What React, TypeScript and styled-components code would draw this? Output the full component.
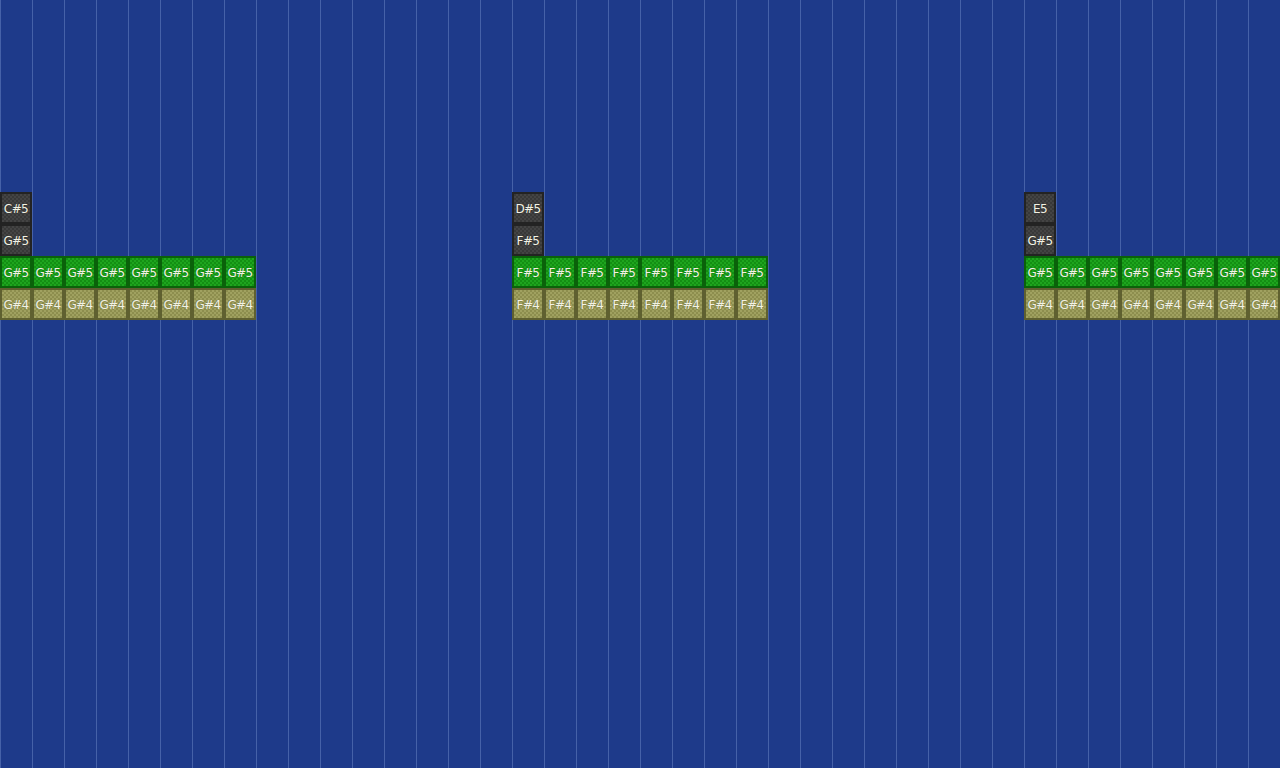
import React from 'react';
import styled, { createGlobalStyle } from 'styled-components';

const CELL = 32;
const COLS = 40;
const ROWS = 24;

const GlobalStyle = createGlobalStyle`
  html, body {
    margin: 0;
    padding: 0;
    background: #1e3a8a;
    overflow: hidden;
  }
`;

const Roll = styled.div`
  display: grid;
  grid-template-columns: repeat(${COLS}, ${CELL}px);
  grid-template-rows: repeat(${ROWS}, ${CELL}px);
  width: ${COLS * CELL}px;
  height: ${ROWS * CELL}px;
  background-color: #1e3a8a;
  background-image: linear-gradient(
    to right,
    rgba(120, 145, 205, 0.45) 0,
    rgba(120, 145, 205, 0.45) 1px,
    transparent 1px
  );
  background-size: ${CELL}px 100%;
`;

type Kind = 'root' | 'upper' | 'lower';

const palette: Record<Kind, { edge: string; a: string; b: string }> = {
  root: { edge: '#232323', a: '#383838', b: '#444444' },
  upper: { edge: '#0a620a', a: '#138f13', b: '#1ea51e' },
  lower: { edge: '#5f6030', a: '#8d8e4e', b: '#a0a160' },
};

const Note = styled.div<{ $kind: Kind; $col: number; $row: number }>`
  grid-column: ${(p) => p.$col + 1};
  grid-row: ${(p) => p.$row + 1};
  box-sizing: border-box;
  border: 2px solid ${(p) => palette[p.$kind].edge};
  background-color: ${(p) => palette[p.$kind].a};
  background-image: conic-gradient(
    ${(p) => palette[p.$kind].b} 0 25%,
    transparent 0 50%,
    ${(p) => palette[p.$kind].b} 0 75%,
    transparent 0
  );
  background-size: 4px 4px;
  display: flex;
  align-items: center;
  justify-content: center;
  font-family: 'DejaVu Sans', 'Liberation Sans', sans-serif;
  font-size: 12px;
  color: #f2f2e4;
  letter-spacing: -0.6px;
  line-height: 1;
  padding-top: 2px;
  text-shadow: 0 0 1px rgba(0, 0, 0, 0.35);
`;

interface Chord {
  col: number;
  stack: string[];
  upper: string;
  lower: string;
}

const chords: Chord[] = [
  { col: 0, stack: ['C#5', 'G#5'], upper: 'G#5', lower: 'G#4' },
  { col: 16, stack: ['D#5', 'F#5'], upper: 'F#5', lower: 'F#4' },
  { col: 32, stack: ['E5', 'G#5'], upper: 'G#5', lower: 'G#4' },
];

const STACK_ROW = 6;
const STEPS = 8;

const App = () => {
  return (
    <>
      <GlobalStyle />
      <Roll>
        {chords.map((chord) => (
          <React.Fragment key={chord.col}>
            {chord.stack.map((name, i) => (
              <Note
                key={`s${i}`}
                $kind="root"
                $col={chord.col}
                $row={STACK_ROW + i}
              >
                {name}
              </Note>
            ))}
            {Array.from({ length: STEPS }).map((_, i) => (
              <Note
                key={`u${i}`}
                $kind="upper"
                $col={chord.col + i}
                $row={STACK_ROW + chord.stack.length}
              >
                {chord.upper}
              </Note>
            ))}
            {Array.from({ length: STEPS }).map((_, i) => (
              <Note
                key={`l${i}`}
                $kind="lower"
                $col={chord.col + i}
                $row={STACK_ROW + chord.stack.length + 1}
              >
                {chord.lower}
              </Note>
            ))}
          </React.Fragment>
        ))}
      </Roll>
    </>
  );
};

export default App;
